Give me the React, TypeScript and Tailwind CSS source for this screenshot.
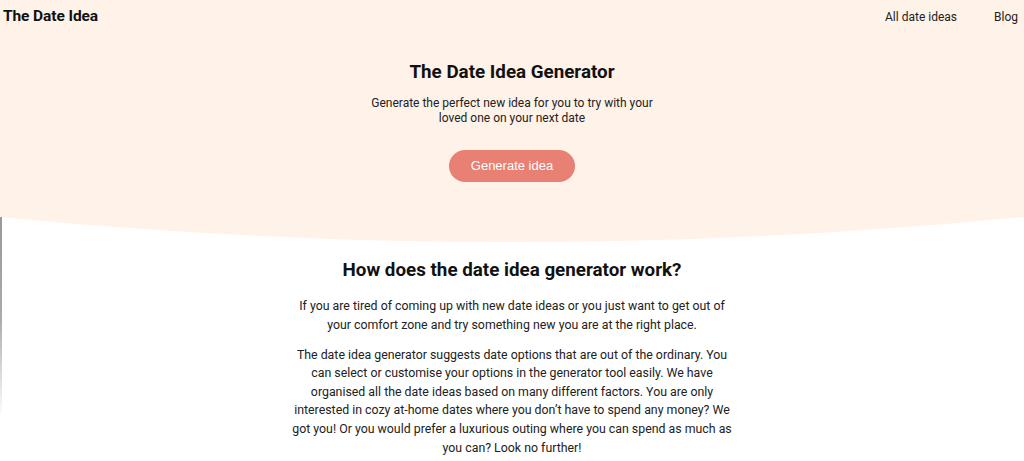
import React from "react";

export default function App() {
  return (
    <div className="min-h-[461px] bg-white text-[#111] overflow-hidden" style={{ fontFamily: "Roboto, 'Noto Sans', sans-serif" }}>
      <div className="bg-[#fff2e8]">
        <header className="flex items-center justify-between h-[33px] pl-[3px] pr-[6px]">
          <div className="text-[15.5px] font-bold tracking-[-0.1px]">The Date Idea</div>
          <nav className="flex items-center gap-[37px] text-[12px] text-[#222]">
            <span>All date ideas</span>
            <span>Blog</span>
          </nav>
        </header>
        <section className="flex flex-col items-center pt-[27px] pb-[35px]">
          <h1 className="text-[18.8px] font-bold leading-[24px]">The Date Idea Generator</h1>
          <p className="mt-[12px] w-[300px] text-center text-[12px] leading-[15px] text-[#222]">
            Generate the perfect new idea for you to try with your loved one on your next date
          </p>
          <button
            className="mt-[24px] w-[126px] h-[32px] rounded-full bg-[#e98074] text-white text-[13px]"
            style={{ fontFamily: "'Liberation Sans', Arial, sans-serif" }}
          >
            Generate idea
          </button>
        </section>
      </div>
      <div className="relative">
        <svg className="block w-full h-[25px]" viewBox="0 0 1024 25" preserveAspectRatio="none">
          <path d="M0 0 H1024 V0 Q512 50 0 0 Z" fill="#fff2e8" />
        </svg>
        <div className="absolute left-0 top-0 w-[2px] h-[200px] bg-gradient-to-b from-[#999] via-[#aaa] to-transparent" />
      </div>
      <section className="flex flex-col items-center pt-[16px]">
        <h2 className="text-[18.8px] font-bold leading-[24px]">How does the date idea generator work?</h2>
        <p className="mt-[15px] w-[440px] text-center text-[12.35px] leading-[18.6px] text-[#222]">
          If you are tired of coming up with new date ideas or you just want to get out of your comfort zone and try something new you are at the right place.
        </p>
        <p className="mt-[11.5px] w-[440px] text-center text-[12.35px] leading-[18.6px] text-[#222]">
          The date idea generator suggests date options that are out of the ordinary. You can select or customise your options in the generator tool easily. We have organised all the date ideas based on many different factors. You are only interested in cozy at-home dates where you don’t have to spend any money? We got you! Or you would prefer a luxurious outing where you can spend as much as you can? Look no further!
        </p>
      </section>
    </div>
  );
}
